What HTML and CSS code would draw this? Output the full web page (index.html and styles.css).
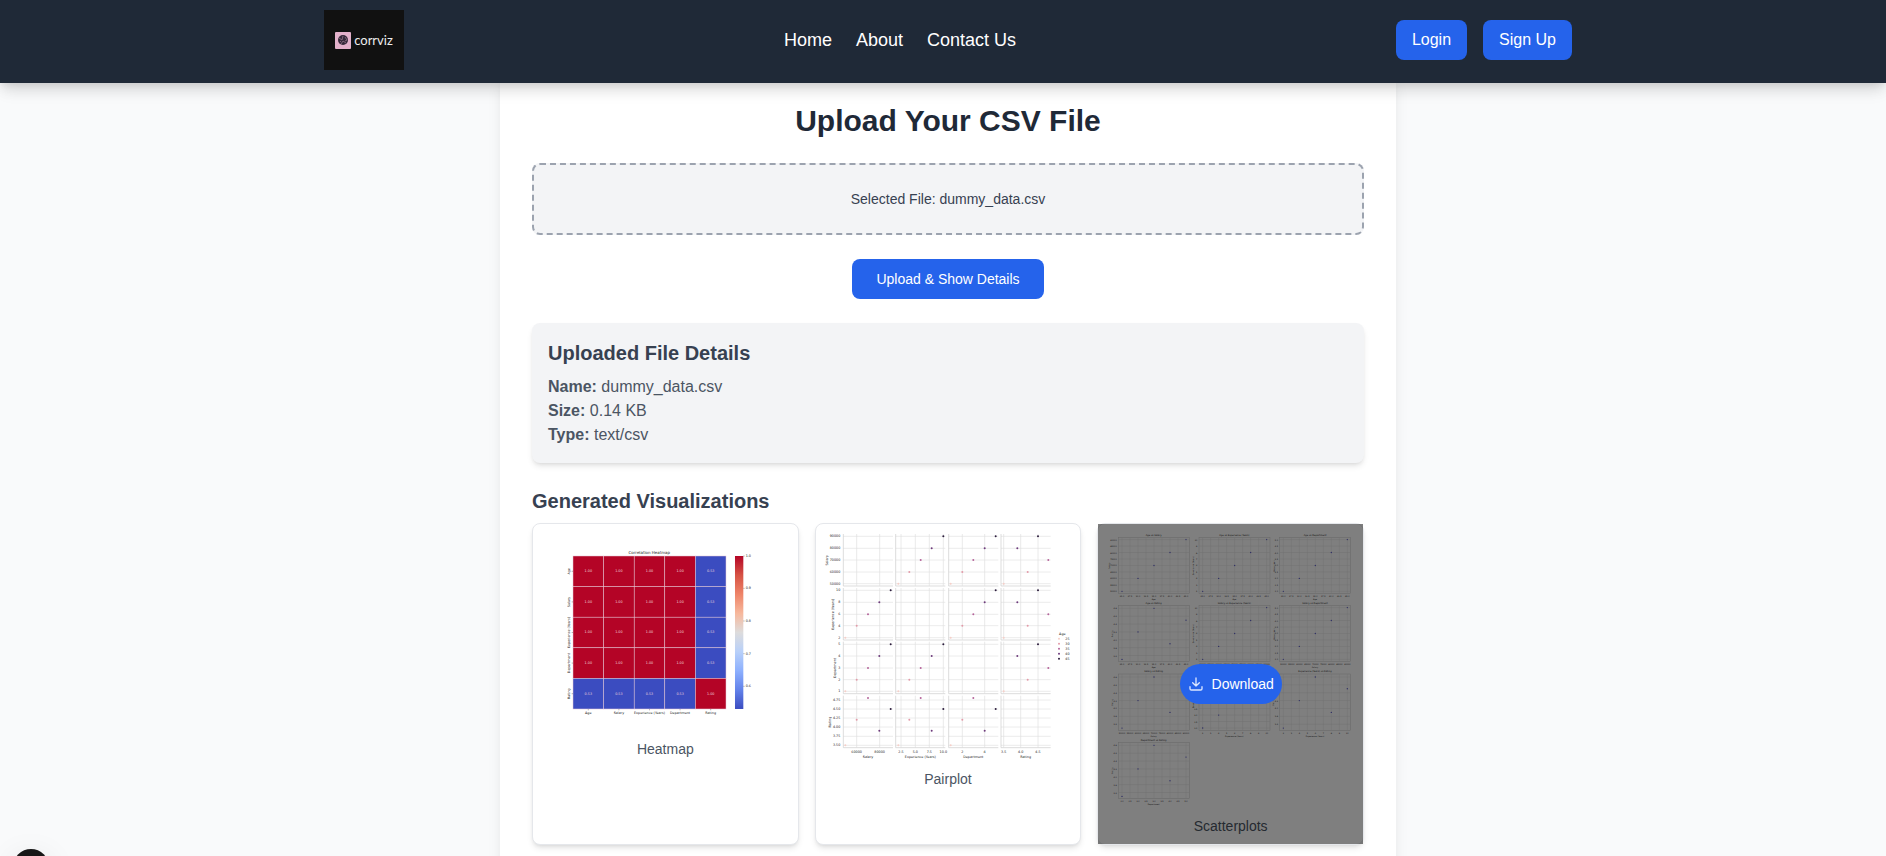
FILE: index.html
```html
<!DOCTYPE html>
<html lang="en">
<head>
<meta charset="utf-8">
<meta name="viewport" content="width=device-width, initial-scale=1">
<title>Corrviz</title>
<link rel="stylesheet" href="styles.css">
</head>
<body>
<header class="site-header">
  <div class="header-inner">
    <a class="logo" href="#" aria-label="corrviz">
      <svg class="logo-mark" viewBox="0 0 16 17" aria-hidden="true">
        <rect width="16" height="17" rx="1" fill="#e3b1cb"/>
        <circle cx="8" cy="8" r="5" fill="#35293a"/>
        <path d="M4 6l3 2 1-4M6 12l2-3 3 2M10 5l2 3-2 1M5 9l1 1" fill="none" stroke="#94748a" stroke-width=".8"/>
      </svg>
      <span class="logo-name">corrviz</span>
    </a>
    <nav class="nav">
      <a href="#">Home</a>
      <a href="#">About</a>
      <a href="#">Contact Us</a>
    </nav>
    <div class="auth">
      <button class="btn btn-auth" type="button">Login</button>
      <button class="btn btn-auth" type="button">Sign Up</button>
    </div>
  </div>
</header>

<div class="content">
<main class="panel">
  <h1 class="title">Upload Your CSV File</h1>
  <label class="dropzone">
    <input class="file-input" type="file" accept=".csv">
    <span>Selected File: dummy_data.csv</span>
  </label>
  <button class="btn btn-upload" type="button">Upload &amp; Show Details</button>

  <section class="details">
    <h2 class="heading">Uploaded File Details</h2>
    <p><strong>Name:</strong> dummy_data.csv</p>
    <p><strong>Size:</strong> 0.14 KB</p>
    <p><strong>Type:</strong> text/csv</p>
  </section>

  <section>
    <h2 class="heading">Generated Visualizations</h2>
    <div class="grid">
      <figure class="card">
        <svg class="chart" id="heatmap" viewBox="0 0 746 597" role="img" aria-label="Heatmap"></svg>
        <figcaption>Heatmap</figcaption>
      </figure>
      <figure class="card">
        <svg class="chart" id="pairplot" viewBox="0 0 746 687" role="img" aria-label="Pairplot"></svg>
        <figcaption>Pairplot</figcaption>
      </figure>
      <figure class="card">
        <svg class="chart" id="scatter" viewBox="0 0 746 829" role="img" aria-label="Scatterplots"></svg>
        <figcaption>Scatterplots</figcaption>
        <div class="overlay">
          <button class="btn btn-download" type="button">
            <svg class="icon" viewBox="0 0 24 24" aria-hidden="true"><path d="M3 16v3a2 2 0 0 0 2 2h14a2 2 0 0 0 2-2v-3M12 3v12M7 10l5 5 5-5"/></svg>
            Download
          </button>
        </div>
      </figure>
    </div>
  </section>
</main>
</div>
<div class="dev-badge"></div>
<script src="charts.js"></script>
</body>
</html>
```
FILE: styles.css
```css
:root {
  --blue: #2563eb;
  --gutter: 10px;
}

* { box-sizing: border-box; }

body {
  margin: 0;
  min-height: 100vh;
  background: #f9fafb;
  color: #1f2937;
  font: 16px/24px "Liberation Sans", Arial, sans-serif;
}

h1, h2, p, figure { margin: 0; }

.site-header {
  position: sticky;
  top: 0;
  z-index: 10;
  padding: 10px 0 13px var(--gutter);
  background: #1f2937;
  box-shadow: 0 10px 15px -3px rgba(0, 0, 0, .1), 0 4px 6px -2px rgba(0, 0, 0, .05), 0 2px 16px rgba(0, 0, 0, .1);
}

.header-inner {
  display: flex;
  align-items: center;
  justify-content: space-between;
  max-width: 1280px;
  margin: 0 auto;
  padding: 0 16px;
}

.logo {
  display: flex;
  align-items: center;
  justify-content: center;
  gap: 3px;
  width: 80px;
  height: 60px;
  background: #111;
  color: #eee;
  text-decoration: none;
}

.logo-mark { width: 16px; height: 17px; }

.logo-name { font: 13px/16px Lato, sans-serif; }

.nav { display: flex; gap: 24px; }

.nav a {
  color: #fff;
  font-size: 18px;
  line-height: 28px;
  text-decoration: none;
}

.auth { display: flex; gap: 16px; }

.btn {
  border: 0;
  border-radius: 8px;
  background: var(--blue);
  color: #fff;
  font-family: inherit;
  cursor: pointer;
}

.btn-auth {
  padding: 8px 16px;
  font-size: 16px;
  line-height: 24px;
}

.content {
  margin-top: -12px;
  padding-left: var(--gutter);
}

.panel {
  max-width: 896px;
  margin: 0 auto;
  padding: 32px;
  background: #fff;
  box-shadow: 0 10px 15px -3px rgba(0, 0, 0, .1), 0 4px 6px -4px rgba(0, 0, 0, .1);
}

.title {
  margin-bottom: 24px;
  color: #1f2937;
  font-size: 30px;
  line-height: 36px;
  text-align: center;
}

.dropzone {
  display: block;
  padding: 24px;
  border: 2px dashed #9ca3af;
  border-radius: 8px;
  background: #f3f4f6;
  color: #374151;
  font-size: 14px;
  line-height: 20px;
  text-align: center;
  cursor: pointer;
}

.file-input { display: none; }

.btn-upload {
  display: block;
  margin: 24px auto;
  padding: 10px 24px;
  font-size: 14px;
  line-height: 20px;
}

.details {
  margin-bottom: 24px;
  padding: 16px;
  border-radius: 8px;
  background: #f3f4f6;
  color: #4b5563;
  box-shadow: 0 4px 6px -1px rgba(0, 0, 0, .1), 0 2px 4px -2px rgba(0, 0, 0, .1);
}

.heading {
  margin-bottom: 8px;
  color: #374151;
  font-size: 20px;
  line-height: 28px;
}

.grid {
  display: grid;
  grid-template-columns: repeat(3, 1fr);
  gap: 16px;
}

.card {
  position: relative;
  padding: 8px;
  border: 1px solid #e5e7eb;
  border-radius: 8px;
  background: #fff;
  box-shadow: 0 4px 6px -1px rgba(0, 0, 0, .1), 0 2px 4px -2px rgba(0, 0, 0, .1);
}

.card figcaption {
  margin-top: 8px;
  color: #4b5563;
  font-size: 14px;
  line-height: 20px;
  text-align: center;
}

.chart {
  display: block;
  width: 100%;
  font-family: "DejaVu Sans", sans-serif;
}

.overlay {
  position: absolute;
  inset: 0;
  display: flex;
  align-items: center;
  justify-content: center;
  background: rgba(0, 0, 0, .5);
}

.btn-download {
  display: flex;
  align-items: center;
  gap: 8px;
  padding: 10px 8px;
  border-radius: 20px;
  font-size: 14px;
  line-height: 20px;
}

.icon {
  width: 16px;
  height: 16px;
  fill: none;
  stroke: #dbe6ff;
  stroke-width: 2;
  stroke-linecap: round;
  stroke-linejoin: round;
}

.dev-badge {
  position: fixed;
  left: 13px;
  bottom: -29px;
  width: 36px;
  height: 36px;
  border-radius: 50%;
  background: #171717;
  box-shadow: 0 8px 32px rgba(0, 0, 0, .1);
}
```
FILE: charts.js
```js
const NS = "http://www.w3.org/2000/svg";

function add(parent, tag, attrs, text) {
  const el = document.createElementNS(NS, tag);
  for (const key in attrs) el.setAttribute(key, attrs[key]);
  if (text !== undefined) el.textContent = text;
  parent.appendChild(el);
  return el;
}

function label(svg, x, y, text, size, opts = {}) {
  const attrs = {
    x, y, "font-size": size, "dominant-baseline": "central",
    "text-anchor": opts.anchor || "middle", fill: opts.fill || "#222"
  };
  if (opts.up) attrs.transform = `rotate(-90 ${x} ${y})`;
  add(svg, "text", attrs, text);
}

function line(svg, x1, y1, x2, y2, stroke, width) {
  add(svg, "line", { x1, y1, x2, y2, stroke, "stroke-width": width });
}

function drawHeatmap() {
  const svg = document.getElementById("heatmap");
  const names = ["Age", "Salary", "Experience (Years)", "Department", "Rating"];
  const left = 96, top = 72, cell = 91.8;
  label(svg, 325, 61, "Correlation Heatmap", 12);
  names.forEach((name, r) => {
    const mid = top + cell * (r + 0.5);
    names.forEach((_, c) => {
      const low = (r === 4) !== (c === 4);
      add(svg, "rect", {
        x: left + c * cell, y: top + r * cell, width: cell, height: cell,
        fill: low ? "#3b4cc0" : "#b40426", stroke: "#e4c5d4", "stroke-width": 1.5
      });
      label(svg, left + cell * (c + 0.5), mid, low ? "0.53" : "1.00", 10, { fill: "#f0d5dc" });
    });
    label(svg, 83, mid, name, 10, { up: true });
    line(svg, 92, mid, 96, mid, "#222", 1);
    const x = left + cell * (r + 0.5);
    line(svg, x, 531, x, 535, "#222", 1);
    label(svg, x, 543, name, 10);
  });
  const grad = add(add(svg, "defs", {}), "linearGradient", { id: "coolwarm", x1: 0, y1: 0, x2: 0, y2: 1 });
  ["#b40426", "#d65244", "#ee8468", "#f7b89c", "#dddcdc", "#b8d0f9", "#8db0fe", "#6282ea", "#3b4cc0"]
    .forEach((color, i) => add(grad, "stop", { offset: i / 8, "stop-color": color }));
  add(svg, "rect", { x: 582, y: 72, width: 25, height: 459, fill: "url(#coolwarm)" });
  [["1.0", 72], ["0.9", 169], ["0.8", 267], ["0.7", 365], ["0.6", 463]].forEach(([text, y]) => {
    line(svg, 607, y, 611, y, "#222", 1);
    label(svg, 614, y, text, 10, { anchor: "start" });
  });
}

function drawPairplot() {
  const svg = document.getElementById("pairplot");
  const colors = ["#f6cfc8", "#e39aa8", "#b5649a", "#6e3c7c", "#2d1e3e"];
  const cols = [
    { name: "Salary", x: 58, ticks: [["60000", 98], ["80000", 167]], pts: [64, 98, 132, 166, 200] },
    { name: "Experience (Years)", x: 215, ticks: [["2.5", 231], ["5.0", 274], ["7.5", 316], ["10.0", 358]], pts: [223, 256, 290, 323, 358] },
    { name: "Department", x: 374, ticks: [["2", 415], ["4", 482]], pts: [380, 415, 448, 482, 515] },
    { name: "Rating", x: 531, ticks: [["3.5", 539], ["4.0", 590], ["4.5", 642]], pts: [539, 611, 673, 580, 642] }
  ];
  const rows = [
    { name: "Salary", lx: 10, y: 6, labels: ["90000", "80000", "70000", "60000", "50000"], at: [13, 49, 84, 120, 155], pts: [155, 120, 84, 49, 13] },
    { name: "Experience (Years)", lx: 28, y: 168, labels: ["10", "8", "6", "4", "2"], at: [175, 211, 247, 281, 317], pts: [317, 281, 247, 211, 175] },
    { name: "Department", lx: 33, y: 329, labels: ["5", "4", "3", "2", "1"], at: [337, 372, 408, 443, 478], pts: [478, 443, 408, 372, 337] },
    { name: "Rating", lx: 19, y: 491, labels: ["4.75", "4.50", "4.25", "4.00", "3.75", "3.50"], at: [504, 531, 558, 585, 613, 640], pts: [640, 563, 498, 596, 531] }
  ];
  rows.forEach((row, r) => {
    cols.forEach((col, c) => {
      row.at.forEach(y => line(svg, col.x, y, col.x + 149, y, "#e2e2e2", 2));
      col.ticks.forEach(([, x]) => line(svg, x, row.y, x, row.y + 155, "#e0e0e0", 2));
      line(svg, col.x, row.y, col.x, row.y + 156, "#ccc", 2);
      line(svg, col.x, row.y + 156, col.x + 149, row.y + 156, "#ccc", 2);
      if (r !== c) {
        row.pts.forEach((y, i) => add(svg, "circle", { cx: col.pts[i], cy: y, r: 3, fill: colors[i] }));
      }
    });
    row.labels.forEach((text, i) => label(svg, 49, row.at[i], text, 10, { anchor: "end" }));
    label(svg, row.lx, row.y + 79, row.name, 10, { up: true });
  });
  cols.forEach(col => {
    col.ticks.forEach(([text, x]) => label(svg, x, 661, text, 10));
    label(svg, col.x + 74, 674, col.name, 10);
  });
  label(svg, 715, 305, "Age", 10);
  colors.forEach((fill, i) => {
    add(svg, "circle", { cx: 705, cy: 320 + i * 15, r: 3, fill });
    label(svg, 724, 320 + i * 15, String(25 + i * 5), 10, { anchor: "start" });
  });
}

function range(start, step, count, digits) {
  return Array.from({ length: count }, (_, i) => (start + step * i).toFixed(digits));
}

function drawScatter() {
  const svg = document.getElementById("scatter");
  const data = {
    "Age": { labels: range(25, 2.5, 9, 1) },
    "Salary": { labels: range(50000, 5000, 9, 0), off: 27 },
    "Experience (Years)": { labels: range(2, 1, 9, 0), off: 17 },
    "Department": { labels: range(1, 0.5, 9, 1), off: 18 },
    "Rating": { labels: range(3.6, 0.2, 7, 1), off: 19 }
  };
  const names = Object.keys(data);
  const pairs = [];
  names.forEach((a, i) => names.slice(i + 1).forEach(b => pairs.push([a, b])));
  const ratings = [3.5, 4.2, 4.8, 3.9, 4.5];
  const lefts = [37, 279, 521], tops = [16, 220, 426, 631];
  pairs.forEach(([xName, yName], n) => {
    const x0 = lefts[n % 3], y0 = tops[Math.floor(n / 3)];
    const rating = yName === "Rating";
    const yOf = value => y0 + 9 + (4.8 - value) * 118;
    const xs = xName === "Rating" ? [] : ratings.map((_, i) => x0 + 11 + i * 48);
    add(svg, "rect", { x: x0, y: y0, width: 213, height: 169, fill: "none", stroke: "#ccc", "stroke-width": 1.5 });
    data[xName].labels.forEach((text, i) => {
      const x = x0 + 11 + i * 24;
      line(svg, x, y0, x, y0 + 169, "#e2e2e2", 1.5);
      label(svg, x, y0 + 177, text, 6);
    });
    data[yName].labels.forEach((text, i) => {
      const y = rating ? yOf(Number(text)) : y0 + 162 - i * 19.4;
      line(svg, x0, y, x0 + 213, y, "#e2e2e2", 1.5);
      label(svg, x0 - 5, y, text, 6, { anchor: "end" });
    });
    xs.forEach((cx, i) => {
      const cy = rating ? yOf(ratings[i]) : y0 + 162 - i * 38.8;
      add(svg, "circle", { cx, cy, r: 2, fill: "#5a5ac8" });
    });
    label(svg, x0 + 106, y0 - 6, `${xName} vs ${yName}`, 7);
    label(svg, x0 + 106, y0 + 185, xName, 6);
    label(svg, x0 - data[yName].off, y0 + 85, yName, 6, { up: true });
  });
}

drawHeatmap();
drawPairplot();
drawScatter();
```
